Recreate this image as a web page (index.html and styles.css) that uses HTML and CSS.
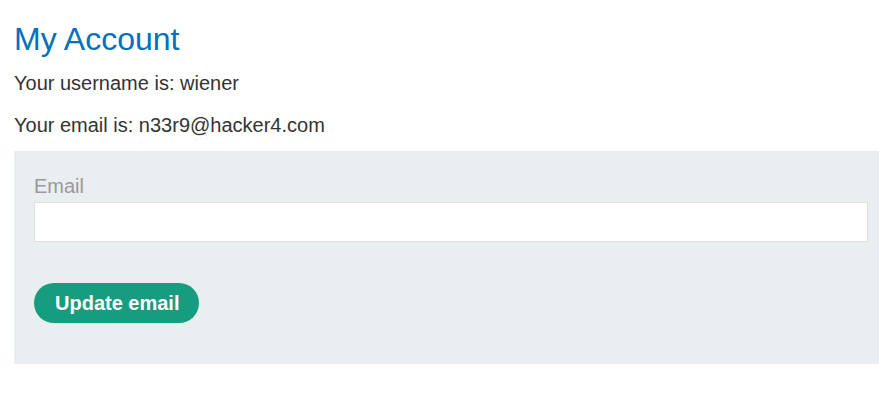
FILE: index.html
```html
<!DOCTYPE html>
<html>
<head>
<meta charset="utf-8">
<link rel="stylesheet" href="styles.css">
</head>
<body>
<div class="page">
  <h1 class="title">My Account</h1>
  <p class="info info-first">Your username is: wiener</p>
  <p class="info">Your email is: n33r9@hacker4.com</p>
  <form class="login-form">
    <label class="field-label">Email</label>
    <input class="field-input" type="email" name="email">
    <button class="button" type="button">Update email</button>
  </form>
</div>
</body>
</html>
```

FILE: styles.css
```css
html, body {
  margin: 0;
  padding: 0;
  background: #fff;
}
body {
  font-family: "Liberation Sans", Arial, sans-serif;
  color: #333332;
  overflow: hidden;
}
.page {
  padding: 0 0 0 14px;
}
.title {
  margin: 0;
  padding-top: 20px;
  font-size: 32px;
  line-height: 38px;
  font-weight: normal;
  color: #0071bc;
}
.info {
  margin: 0;
  padding-top: 20px;
  font-size: 20px;
  line-height: 22px;
}
.info-first {
  padding-top: 14px;
}
.login-form {
  margin-top: 15px;
  background: #e9eef0;
  padding: 20px 11px 41px 20px;
  display: flex;
  flex-direction: column;
  align-items: flex-start;
}
.field-label {
  font-size: 20px;
  line-height: 30px;
  color: #999;
}
.field-input {
  box-sizing: border-box;
  width: 100%;
  height: 40px;
  margin: 1px 0 0 0;
  border: 1px solid #e0e0e0;
  background: #fff;
  font-size: 16px;
}
.button {
  margin-top: 41px;
  height: 40px;
  padding: 0 20px 0 21px;
  border: none;
  border-radius: 20px;
  background: #169c7f;
  color: #fff;
  font-family: "Liberation Sans", Arial, sans-serif;
  font-size: 20px;
  font-weight: bold;
}
```
